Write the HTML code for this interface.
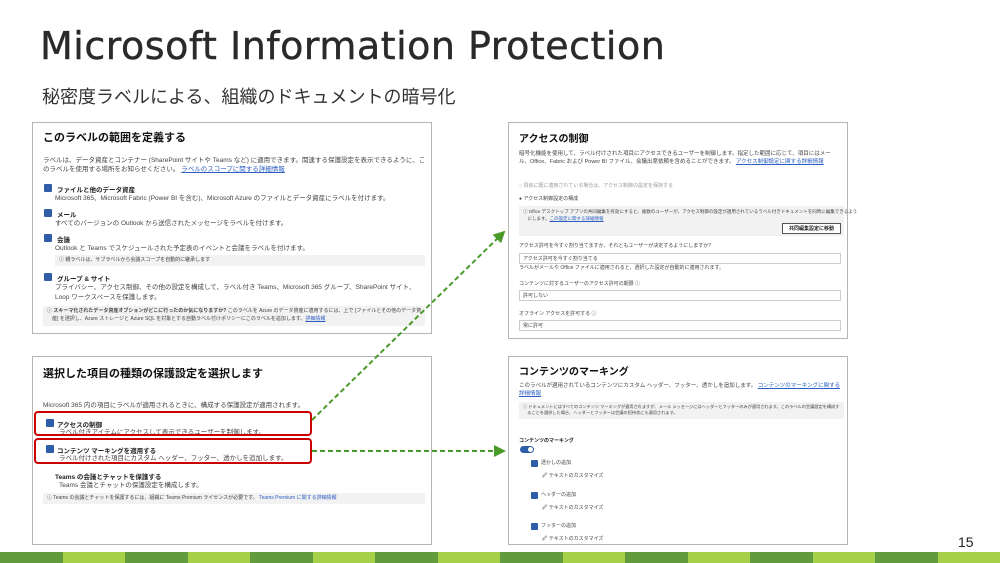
<!DOCTYPE html>
<html><head><meta charset="utf-8"><style>
*{margin:0;padding:0;box-sizing:border-box}
body{width:1000px;height:563px;background:#fff;position:relative;overflow:hidden;font-family:"Liberation Sans","Noto Sans CJK JP",sans-serif;color:#222}
.abs{position:absolute}
h1{position:absolute;left:40px;top:24px;font-size:38px;font-weight:normal;color:#2a2a2a;letter-spacing:0.5px;font-family:"DejaVu Sans","Noto Sans CJK JP",sans-serif;-webkit-text-stroke:0.4px #2a2a2a}
.sub{left:42px;top:83px;font-size:18px;color:#333}
.p{position:absolute;border:1px solid #b5b5b5;background:#fff}
.t{font-size:11px;font-weight:bold;color:#111;position:absolute}
.s{font-size:6.5px;color:#444;position:absolute;white-space:nowrap;line-height:9px}
.b{font-size:7.5px;color:#333;position:absolute;white-space:nowrap}
.bb{font-size:6.5px;font-weight:bold;position:absolute;white-space:nowrap}
.cb{position:absolute;width:8px;height:8px;background:#2f5ea8;border-radius:1px}
.note{position:absolute;background:#f2f2f2}
.sel{position:absolute;border:1px solid #ccc;height:11px;background:#fff}
.lk{color:#2b5ec0;text-decoration:underline}
.red{position:absolute;border:2.5px solid #c00;border-radius:4px}
.bar{position:absolute;top:552px;height:11px;width:62.5px}
</style></head><body>
<h1>Microsoft Information Protection</h1>
<div class="abs sub">秘密度ラベルによる、組織のドキュメントの暗号化</div>

<div class="p" style="left:32px;top:122px;width:400px;height:212px">
<div class="t" style="left:10px;top:6px">このラベルの範囲を定義する</div>
<div class="s" style="left:10px;top:33px">ラベルは、データ資産とコンテナー (SharePoint サイトや Teams など) に適用できます。関連する保護設定を表示できるように、こ</div>
<div class="s" style="left:10px;top:42px">のラベルを使用する場所をお知らせください。 <span class="lk">ラベルのスコープに関する詳細情報</span></div>
<div class="cb" style="left:11px;top:61px"></div><div class="bb" style="left:24px;top:61px">ファイルと他のデータ資産</div>
<div class="s" style="left:22px;top:71px">Microsoft 365、Microsoft Fabric (Power BI を含む)、Microsoft Azure のファイルとデータ資産にラベルを付けます。</div>
<div class="cb" style="left:11px;top:86px"></div><div class="bb" style="left:24px;top:86px">メール</div>
<div class="s" style="left:22px;top:96px">すべてのバージョンの Outlook から送信されたメッセージをラベルを付けます。</div>
<div class="cb" style="left:11px;top:111px"></div><div class="bb" style="left:24px;top:111px">会議</div>
<div class="s" style="left:22px;top:121px">Outlook と Teams でスケジュールされた予定表のイベントと会議をラベルを付けます。</div>
<div class="note" style="left:22px;top:132px;width:370px;height:11px"><div class="s" style="left:4px;top:1px;font-size:5px">ⓘ 親ラベルは、サブラベルから会議スコープを自動的に継承します</div></div>
<div class="cb" style="left:11px;top:150px"></div><div class="bb" style="left:24px;top:150px">グループ &amp; サイト</div>
<div class="s" style="left:22px;top:160px">プライバシー、アクセス制御、その他の設定を構成して、ラベル付き Teams、Microsoft 365 グループ、SharePoint サイト、</div>
<div class="s" style="left:22px;top:170px">Loop ワークスペースを保護します。</div>
<div class="note" style="left:10px;top:183px;width:382px;height:20px"><div class="s" style="left:4px;top:1px;font-size:5px;line-height:8px">ⓘ <b>スキーマ化されたデータ資産オプションがどこに行ったのか気になりますか?</b> このラベルを Azure のデータ資産に適用するには、上で [ファイルとその他のデータ資<br>　産] を選択し、Azure ストレージと Azure SQL を対象とする自動ラベル付けポリシーにこのラベルを追加します。<span class="lk">詳細情報</span></div></div>
</div>

<div class="p" style="left:32px;top:356px;width:400px;height:189px">
<div class="t" style="left:10px;top:8px">選択した項目の種類の保護設定を選択します</div>
<div class="s" style="left:10px;top:44px">Microsoft 365 内の項目にラベルが適用されるときに、構成する保護設定が適用されます。</div>
<div class="cb" style="left:13px;top:62px"></div><div class="bb" style="left:24px;top:62px">アクセスの制御</div>
<div class="s" style="left:26px;top:71px">ラベル付きアイテムにアクセスして表示できるユーザーを制御します。</div>
<div class="cb" style="left:13px;top:88px"></div><div class="bb" style="left:24px;top:88px">コンテンツ マーキングを適用する</div>
<div class="s" style="left:26px;top:97px">ラベル付けされた項目にカスタム ヘッダー、フッター、透かしを追加します。</div>
<div class="bb" style="left:22px;top:114px">Teams の会議とチャットを保護する</div>
<div class="s" style="left:26px;top:124px">Teams 会議とチャットの保護設定を構成します。</div>
<div class="note" style="left:10px;top:136px;width:382px;height:11px"><div class="s" style="left:4px;top:1px;font-size:5px">ⓘ Teams の会議とチャットを保護するには、組織に Teams Premium ライセンスが必要です。 <span style="color:#2b5ec0">Teams Premium に関する詳細情報</span></div></div>
</div>
<div class="red" style="left:34px;top:411px;width:278px;height:25px"></div>
<div class="red" style="left:34px;top:438px;width:278px;height:26px"></div>

<div class="p" style="left:508px;top:122px;width:340px;height:217px">
<div class="t" style="left:10px;top:7px;font-size:10px">アクセスの制御</div>
<div class="s" style="left:10px;top:27px;font-size:5.5px;line-height:8px">暗号化機能を使用して、ラベル付けされた項目にアクセスできるユーザーを制御します。指定した範囲に応じて、項目にはメー<br>ル、Office、Fabric および Power BI ファイル、会議出席依頼を含めることができます。 <span class="lk">アクセス制御設定に関する詳細情報</span></div>
<div class="s" style="left:10px;top:59px;font-size:5px;color:#999">○ 項目に既に適用されている場合は、アクセス制御の設定を保持する</div>
<div class="s" style="left:10px;top:72px;font-size:5px">● アクセス制御設定の構成</div>
<div class="note" style="left:10px;top:83px;width:325px;height:30px"><div class="s" style="left:4px;top:2px;font-size:4.5px;line-height:7px">ⓘ Office デスクトップ アプリの共同編集を有効にすると、複数のユーザーが、アクセス制御の設定が適用されているラベル付きドキュメントを同時に編集できるよう<br>　にします。<span class="lk">この設定に関する詳細情報</span></div>
<div class="abs" style="right:3px;top:17px;border:1px solid #555;background:#fff;font-size:5px;padding:1px 6px;font-weight:bold">共同編集設定に移動</div></div>
<div class="s" style="left:10px;top:119px;font-size:5px">アクセス許可を今すぐ割り当てますか、それともユーザーが決定するようにしますか?</div>
<div class="sel" style="left:10px;top:130px;width:322px"><div class="s" style="left:3px;top:1px;font-size:5px">アクセス許可を今すぐ割り当てる</div></div>
<div class="s" style="left:10px;top:141px;font-size:5px">ラベルがメールや Office ファイルに適用されると、選択した設定が自動的に適用されます。</div>
<div class="s" style="left:10px;top:157px;font-size:5px">コンテンツに対するユーザーのアクセス許可の期限 ⓘ</div>
<div class="sel" style="left:10px;top:167px;width:322px"><div class="s" style="left:3px;top:1px;font-size:5px">許可しない</div></div>
<div class="s" style="left:10px;top:187px;font-size:5px">オフライン アクセスを許可する ⓘ</div>
<div class="sel" style="left:10px;top:197px;width:322px"><div class="s" style="left:3px;top:1px;font-size:5px">常に許可</div></div>
</div>

<div class="p" style="left:508px;top:356px;width:340px;height:189px">
<div class="t" style="left:10px;top:6px;font-size:10px">コンテンツのマーキング</div>
<div class="s" style="left:10px;top:25px;font-size:5.5px;line-height:8px">このラベルが適用されているコンテンツにカスタム ヘッダー、フッター、透かしを追加します。 <span class="lk">コンテンツのマーキングに関する</span><br><span class="lk">詳細情報</span></div>
<div class="note" style="left:10px;top:45px;width:325px;height:17px"><div class="s" style="left:4px;top:2px;font-size:4.2px;line-height:6px">ⓘ ドキュメントにはすべてのコンテンツ マーキングが適用されますが、メール メッセージにはヘッダーとフッターのみが適用されます。このラベルの会議設定を構成す<br>　ることを選択した場合、ヘッダーとフッターは会議の招待状にも適用されます。</div></div>
<div class="bb" style="left:10px;top:80px;font-size:5px">コンテンツのマーキング</div>
<div class="abs" style="left:11px;top:89px;width:14px;height:7px;background:#2f5ea8;border-radius:4px"><div class="abs" style="right:1px;top:1px;width:5px;height:5px;background:#fff;border-radius:50%"></div></div>
<div class="cb" style="left:22px;top:103px;width:7px;height:7px"></div><div class="s" style="left:32px;top:102px;font-size:5px">透かしの追加</div>
<div class="s" style="left:33px;top:115px;font-size:5px">🖉 テキストのカスタマイズ</div>
<div class="cb" style="left:22px;top:135px;width:7px;height:7px"></div><div class="s" style="left:32px;top:134px;font-size:5px">ヘッダーの追加</div>
<div class="s" style="left:33px;top:147px;font-size:5px">🖉 テキストのカスタマイズ</div>
<div class="cb" style="left:22px;top:166px;width:7px;height:7px"></div><div class="s" style="left:32px;top:165px;font-size:5px">フッターの追加</div>
<div class="s" style="left:33px;top:178px;font-size:5px">🖉 テキストのカスタマイズ</div>
</div>

<svg class="abs" style="left:0;top:0" width="1000" height="563">
<defs><marker id="a" markerWidth="6" markerHeight="6" refX="5" refY="3" orient="auto"><path d="M0,0 L6,3 L0,6 z" fill="#4a9a2a"/></marker></defs>
<path d="M312 420 L504 232" stroke="#4a9a2a" stroke-width="2" stroke-dasharray="5,3" fill="none" marker-end="url(#a)"/>
<path d="M312 451 L504 451" stroke="#4a9a2a" stroke-width="2" stroke-dasharray="5,3" fill="none" marker-end="url(#a)"/>
</svg>

<div class="abs" style="left:958px;top:534px;font-size:14px;color:#222">15</div>
<div class="bar" style="left:0;background:#629a3e"></div>
<div class="bar" style="left:62.5px;background:#a5d047"></div>
<div class="bar" style="left:125px;background:#629a3e"></div>
<div class="bar" style="left:187.5px;background:#a5d047"></div>
<div class="bar" style="left:250px;background:#629a3e"></div>
<div class="bar" style="left:312.5px;background:#a5d047"></div>
<div class="bar" style="left:375px;background:#629a3e"></div>
<div class="bar" style="left:437.5px;background:#a5d047"></div>
<div class="bar" style="left:500px;background:#629a3e"></div>
<div class="bar" style="left:562.5px;background:#a5d047"></div>
<div class="bar" style="left:625px;background:#629a3e"></div>
<div class="bar" style="left:687.5px;background:#a5d047"></div>
<div class="bar" style="left:750px;background:#629a3e"></div>
<div class="bar" style="left:812.5px;background:#a5d047"></div>
<div class="bar" style="left:875px;background:#629a3e"></div>
<div class="bar" style="left:937.5px;background:#a5d047"></div>
</body></html>
